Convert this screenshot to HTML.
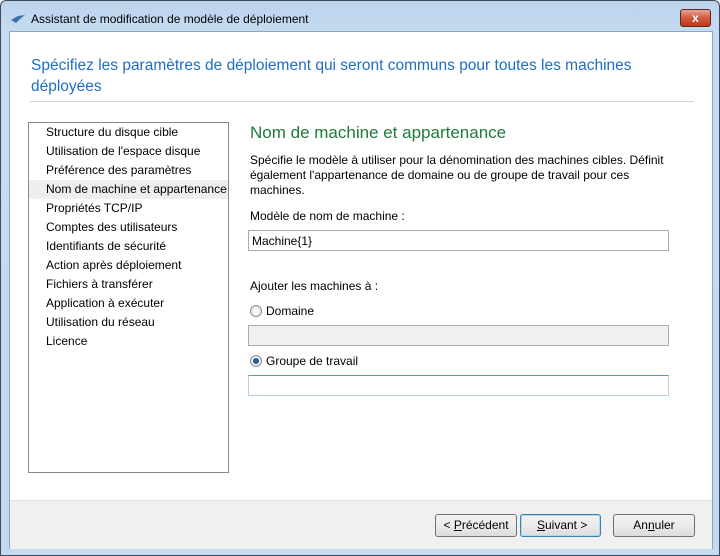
<!DOCTYPE html>
<html><head><meta charset="utf-8"><style>
*{margin:0;padding:0;box-sizing:border-box}
body{width:720px;height:556px;overflow:hidden;font-family:"Liberation Sans",sans-serif;font-size:12px;color:#000;background:#fff}
.win{position:absolute;left:0;top:0;width:720px;height:556px;border:1px solid #3c4a5a;border-radius:6px 6px 0 0;background:linear-gradient(#bcd3ec,#c5dbf1 30px,#c4daf0);}
.title{position:absolute;left:30px;top:11px;font-size:12px;color:#000}
.close{position:absolute;left:679px;top:8px;width:31px;height:18px;border:1px solid #5a2a20;border-radius:3px;background:linear-gradient(#e8a595,#d05a40 50%,#c0391c);color:#fff;font-weight:bold;text-align:center;font-size:12px;line-height:16px}
.client{position:absolute;left:8px;top:30px;width:704px;height:518px;background:#fff;border:1px solid #8ea6c0}
.p{position:absolute}
.head{left:21px;top:23px;color:#1e6fbf;font-size:15.5px;line-height:21px;width:640px}
.sep{left:20px;top:69px;width:664px;height:1px;background:#c8d8e4}
.list{left:18px;top:90px;width:201px;height:351px;border:1px solid #8a8a8a}
.list div{height:19px;line-height:19px;padding-left:17px;white-space:nowrap;font-size:12px}
.list .sel{background:#eee}
.h2{left:240px;top:91px;font-size:17px;color:#1f7a3a}
.in{border:1px solid #acacac;height:21px;width:421px;left:238px}
.btn{position:absolute;top:482px;height:23px;border:1px solid #707070;border-radius:3px;background:linear-gradient(#f2f2f2,#ebebeb 50%,#dcdcdc);text-align:center;line-height:21px}
.radio{display:inline-block;width:12px;height:12px;border:1px solid #8f8f8f;border-radius:50%;background:radial-gradient(#fff,#ddd);vertical-align:-2px;margin-right:4px;position:relative}
.radio.on:after{content:"";position:absolute;left:2px;top:2px;width:6px;height:6px;border-radius:50%;background:#2a5f9e}
</style></head><body>
<div class="win">
<svg style="position:absolute;left:9px;top:13px" width="16" height="10"><path d="M1 6 L8 2 L15 1 L10 5 L6 9 Z" fill="#3d6fa8"/></svg>
<div class="title">Assistant de modification de modèle de déploiement</div>
<div class="close">x</div>
<div class="client">
<div class="p head">Spécifiez les paramètres de déploiement qui seront communs pour toutes les machines déployées</div>
<div class="p sep"></div>
<div class="p list">
<div>Structure du disque cible</div><div>Utilisation de l'espace disque</div><div>Préférence des paramètres</div><div class="sel">Nom de machine et appartenance</div><div>Propriétés TCP/IP</div><div>Comptes des utilisateurs</div><div>Identifiants de sécurité</div><div>Action après déploiement</div><div>Fichiers à transférer</div><div>Application à exécuter</div><div>Utilisation du réseau</div><div>Licence</div>
</div>
<div class="p h2">Nom de machine et appartenance</div>
<div class="p" style="left:240px;top:121px;width:420px;line-height:15px">Spécifie le modèle à utiliser pour la dénomination des machines cibles. Définit également l'appartenance de domaine ou de groupe de travail pour ces machines.</div>
<div class="p" style="left:240px;top:177px">Modèle de nom de machine :</div>
<div class="p in" style="top:198px;padding:3px 3px">Machine{1}</div>
<div class="p" style="left:240px;top:247px">Ajouter les machines à :</div>
<div class="p" style="left:240px;top:272px"><span class="radio"></span>Domaine</div>
<div class="p in" style="top:293px;background:#f0f0f0"></div>
<div class="p" style="left:240px;top:322px"><span class="radio on"></span>Groupe de travail</div>
<div class="p in" style="top:343px;border-color:#5b93c8 #b5cfe7 #b5cfe7 #b5cfe7"></div>
<div class="p" style="left:0;top:468px;width:702px;height:49px;background:#f0f0f0;border-top:1px solid #dfdfdf"></div>
<div class="btn" style="left:425px;width:82px">&lt; <u>P</u>récédent</div>
<div class="btn" style="left:510px;width:81px;border-color:#3c7fb1;box-shadow:inset 0 0 0 1px #a8dcf5">&nbsp;<u>S</u>uivant &gt;</div>
<div class="btn" style="left:603px;width:82px">An<u>n</u>uler</div>
</div>
</div>
</body></html>
